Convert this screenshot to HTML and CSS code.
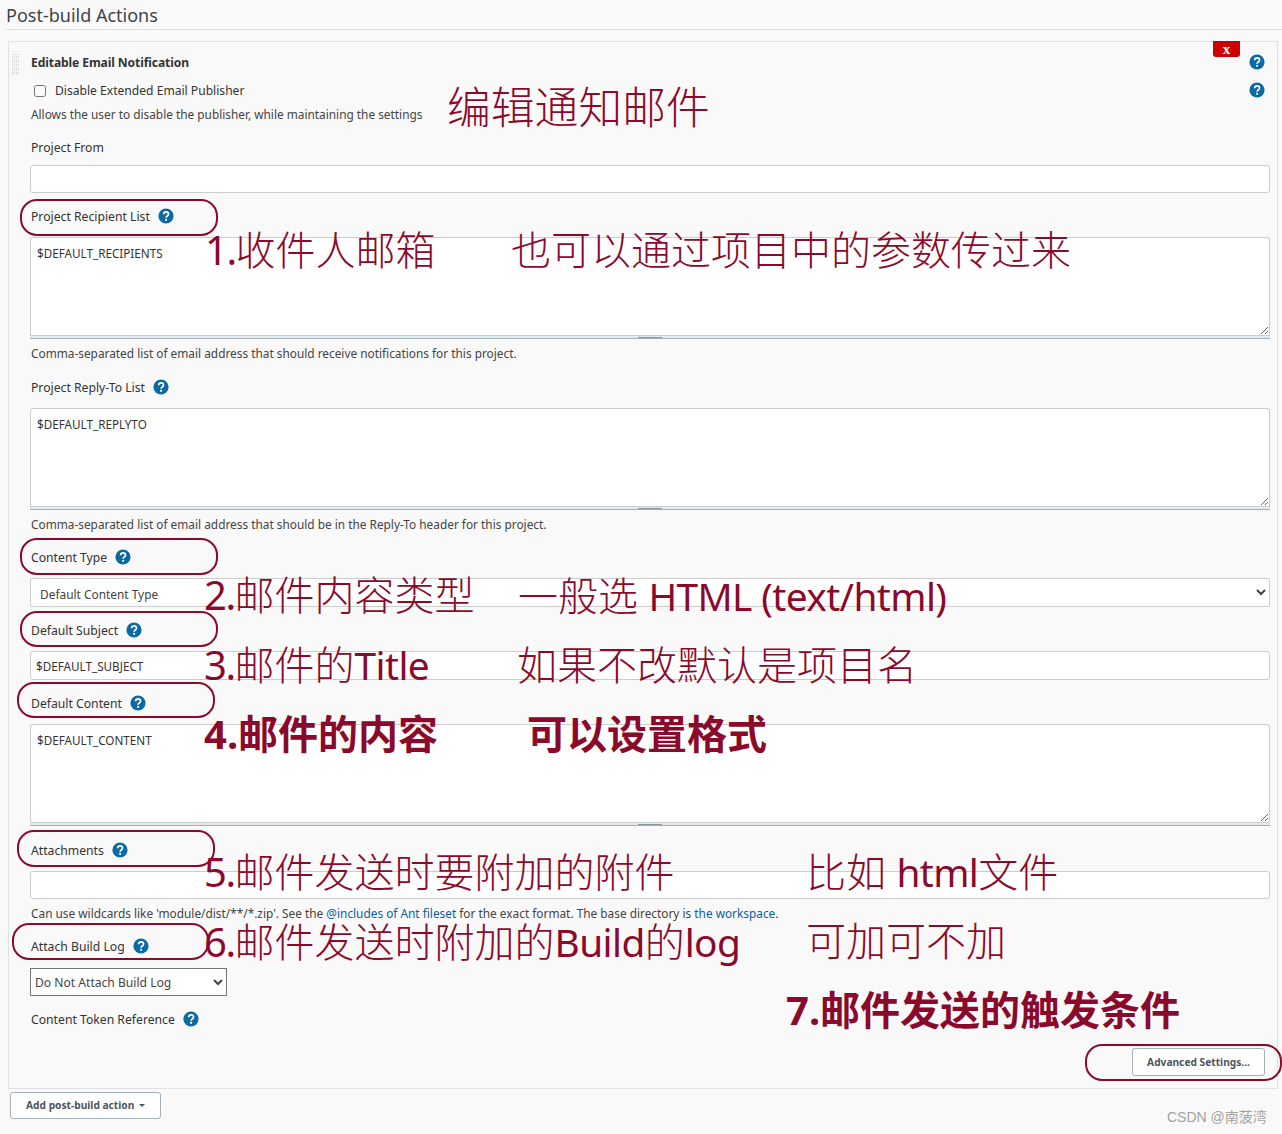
FILE: index.html
```html
<!DOCTYPE html>
<html lang="zh-CN">
<head>
<meta charset="utf-8">
<title>Post-build Actions</title>
<link rel="stylesheet" href="styles.css">
</head>
<body>
<svg class="defs" width="0" height="0" aria-hidden="true">
  <symbol id="help" viewBox="0 0 16 16">
    <circle cx="8" cy="8" r="7.6" fill="#0b6aa2"/>
    <path d="M5.6 6.2C5.7 4.7 6.7 3.9 8.1 3.9c1.4 0 2.4.9 2.4 2.1 0 1-.6 1.5-1.3 2-.7.5-1.1.9-1.1 1.8" fill="none" stroke="#fff" stroke-width="1.7"/>
    <circle cx="8.1" cy="11.8" r="1.1" fill="#fff"/>
  </symbol>
</svg>

<h2 class="section-title">Post-build Actions</h2>

<section class="panel">
  <span class="grip"></span>
  <button class="delete" type="button">x</button>

  <div class="head-row">
    <strong class="head-title">Editable Email Notification</strong>
    <svg class="help"><use href="#help"/></svg>
  </div>
  <div class="check-row">
    <label class="check-label"><input class="check" type="checkbox">Disable Extended Email Publisher</label>
    <svg class="help"><use href="#help"/></svg>
  </div>
  <div class="note">Allows the user to disable the publisher, while maintaining the settings</div>

  <div class="field">
    <div class="label">Project From</div>
    <input class="text text-close" type="text">
  </div>

  <div class="field">
    <div class="label">Project Recipient List <svg class="help"><use href="#help"/></svg></div>
    <div class="area-wrap">
      <textarea class="area">$DEFAULT_RECIPIENTS</textarea>
      <div class="area-grip"></div>
    </div>
    <div class="note">Comma-separated list of email address that should receive notifications for this project.</div>
  </div>

  <div class="field field-wide">
    <div class="label">Project Reply-To List <svg class="help"><use href="#help"/></svg></div>
    <div class="area-wrap">
      <textarea class="area">$DEFAULT_REPLYTO</textarea>
      <div class="area-grip"></div>
    </div>
    <div class="note">Comma-separated list of email address that should be in the Reply-To header for this project.</div>
  </div>

  <div class="field">
    <div class="label">Content Type <svg class="help"><use href="#help"/></svg></div>
    <select class="select-full"><option>Default Content Type</option></select>
  </div>

  <div class="field">
    <div class="label">Default Subject <svg class="help"><use href="#help"/></svg></div>
    <input class="text" type="text" value="$DEFAULT_SUBJECT">
  </div>

  <div class="field">
    <div class="label">Default Content <svg class="help"><use href="#help"/></svg></div>
    <div class="area-wrap">
      <textarea class="area">$DEFAULT_CONTENT</textarea>
      <div class="area-grip"></div>
    </div>
  </div>

  <div class="field field-wide">
    <div class="label">Attachments <svg class="help"><use href="#help"/></svg></div>
    <input class="text text-short" type="text">
    <div class="note">Can use wildcards like 'module/dist/**/*.zip'. See the <a href="#">@includes of Ant fileset</a> for the exact format. The base directory is <a href="#">the workspace</a>.</div>
  </div>

  <div class="field">
    <div class="label">Attach Build Log <svg class="help"><use href="#help"/></svg></div>
    <select class="select-small"><option>Do Not Attach Build Log</option></select>
  </div>

  <div class="field">
    <div class="label">Content Token Reference <svg class="help"><use href="#help"/></svg></div>
  </div>

  <div class="actions"><button class="btn btn-adv" type="button">Advanced Settings...</button></div>
</section>

<button class="btn btn-add" type="button">Add post-build action <span class="caret"></span></button>

<span class="oval ov-recipient"></span>
<span class="oval ov-type"></span>
<span class="oval ov-subject"></span>
<span class="oval ov-content"></span>
<span class="oval ov-attach"></span>
<span class="oval ov-log"></span>
<span class="oval ov-adv"></span>

<span class="note-mark big m-edit">编辑通知邮件</span>
<span class="note-mark m-1"><span class="num">1.</span>收件人邮箱</span>
<span class="note-mark m-1b">也可以通过项目中的参数传过来</span>
<span class="note-mark m-2"><span class="num">2.</span>邮件内容类型</span>
<span class="note-mark m-2b">一般选 <span class="latin">HTML (text/html)</span></span>
<span class="note-mark m-3"><span class="num">3.</span>邮件的<span class="latin">Title</span></span>
<span class="note-mark m-3b">如果不改默认是项目名</span>
<span class="note-mark bold m-4">4.邮件的内容</span>
<span class="note-mark bold m-4b">可以设置格式</span>
<span class="note-mark m-5"><span class="num">5.</span>邮件发送时要附加的附件</span>
<span class="note-mark m-5b">比如 <span class="latin">html</span>文件</span>
<span class="note-mark m-6"><span class="num">6.</span>邮件发送时附加的<span class="latin">Build</span>的<span class="latin">log</span></span>
<span class="note-mark m-6b">可加可不加</span>
<span class="note-mark bold m-7">7.邮件发送的触发条件</span>
<span class="watermark">CSDN @南菠湾</span>
</body>
</html>
```
FILE: styles.css
```css
* { box-sizing: border-box; }
html, body { margin: 0; height: 1134px; overflow: hidden; }
body {
  position: relative;
  background: #f9f9f9;
  color: #333;
  font: 12.2px/22px "Noto Sans", "Noto Sans CJK SC", sans-serif;
}
.defs { position: absolute; }
.section-title {
  margin: 0 0 0 6px;
  height: 30px;
  border-bottom: 1px solid #e0e0e0;
  font-size: 18px;
  font-weight: 400;
  line-height: 31px;
  color: #3f4448;
}
.panel {
  position: relative;
  margin: 11px 4px 0 8px;
  padding: 10px 7px 12px 21px;
  height: 1048px;
  background: #f9f9f9;
  border: 1px solid #e2e2e2;
}
.grip {
  position: absolute;
  left: 2px;
  top: 11px;
  width: 8px;
  height: 22px;
  background:
    linear-gradient(#f9f9f9 1px, transparent 1px) 0 0 / 2px 2px,
    linear-gradient(90deg, #f9f9f9 1px, #d2d2d2 1px) 0 0 / 2px 2px;
}
.delete {
  position: absolute;
  top: -1px;
  right: 37px;
  width: 27px;
  height: 16px;
  padding: 0;
  border: 0;
  border-radius: 0 0 3px 3px;
  background: #cc0000;
  color: #fff;
  font: 700 15px/13px "Liberation Serif", serif;
}
.help { width: 16px; height: 16px; vertical-align: -3px; margin-left: 5px; }
.head-row, .check-row {
  display: flex;
  justify-content: space-between;
  align-items: center;
  height: 20px;
  padding: 0 5px 0 1px;
}
.head-title { padding-top: 2px; line-height: 20px; font-weight: 700; font-size: 12.1px; letter-spacing: -.1px; color: #333; }
.check-row { margin-top: 8px; }
.check-label { display: flex; align-items: center; padding-top: 2px; line-height: 20px; font-size: 12.1px; }
.check { width: 12px; height: 12px; margin: 0 9px 0 3px; }
.note { margin-top: 3px; padding-left: 1px; height: 21px; font-size: 11.85px; color: #444; white-space: nowrap; }
.note a { color: #0b5ea0; text-decoration: none; }
.field { margin-top: 13px; }
.field-wide { margin-top: 14px; }
.label { padding-left: 1px; height: 20px; color: #333; }
.text {
  display: block;
  width: 100%;
  height: 29px;
  margin-top: 11px;
  padding: 1px 5px 0;
  border: 1px solid #ccc;
  border-radius: 3px;
  background: #fff;
  color: #333;
  font: 11.7px "Noto Sans", sans-serif;
}
.text-close { height: 28px; margin-top: 8px; }
.text-short { height: 28px; }
.area-wrap { margin-top: 11px; }
.area {
  display: block;
  width: 100%;
  height: 98px;
  padding: 4.5px 6px;
  border: 1px solid #ccc;
  border-bottom-width: 0;
  border-radius: 3px 3px 0 0;
  background: #fff;
  color: #333;
  font: 11.7px/20px "Noto Sans", sans-serif;
  resize: vertical;
}
.area-grip {
  height: 4px;
  background: #e6eaec linear-gradient(#8a979f, #8a979f) center 1px / 24px 1px no-repeat;
  border-top: 1px solid #c8cfd3;
  border-bottom: 1px solid #9fb0bd;
}
.select-full {
  display: block;
  width: 100%;
  height: 29px;
  margin-top: 11px;
  padding: 3px 0 0 5px;
  border: 1px solid #ccc;
  border-radius: 2px;
  background-color: #fff;
  color: #444;
  font: 11.9px "Noto Sans", sans-serif;
}
.select-small {
  display: block;
  width: 197px;
  height: 28px;
  margin-top: 12px;
  border: 1px solid #767676;
  border-radius: 0;
  background-color: #fff;
  color: #444;
  font: 12.1px "Noto Sans", sans-serif;
}
.actions { display: flex; justify-content: flex-end; margin-top: 19px; padding-right: 5px; }
.btn {
  height: 28px;
  border: 1px solid #a3b1bc;
  border-radius: 3px;
  background: #fff;
  color: #4d545d;
  font: 700 10.2px "Noto Sans", sans-serif;
}
.btn-adv { width: 133px; padding: 0; }
.btn-add { display: block; width: 151px; height: 27px; margin: 3px 0 0 10px; padding: 0 0 1px; }
.caret {
  display: inline-block;
  margin-left: 2px;
  vertical-align: 2px;
  border: 3px solid transparent;
  border-top-color: #4d545d;
  border-bottom-width: 0;
}
.oval {
  position: absolute;
  border: 2px solid #8b0a2b;
  border-radius: 17px;
}
.ov-recipient { left: 20px; top: 199px; width: 198px; height: 37px; }
.ov-type { left: 20px; top: 538px; width: 198px; height: 37px; }
.ov-subject { left: 20px; top: 611px; width: 198px; height: 36px; }
.ov-content { left: 17px; top: 682px; width: 198px; height: 36px; }
.ov-attach { left: 17px; top: 830px; width: 198px; height: 37px; }
.ov-log { left: 12px; top: 923px; width: 197px; height: 37px; }
.ov-adv { left: 1085px; top: 1044px; width: 197px; height: 37px; }
.note-mark {
  position: absolute;
  color: #8b0a2b;
  font: 300 40px/36px "Noto Sans", "Noto Sans CJK SC", sans-serif;
  white-space: nowrap;
}
.note-mark.big { font-size: 43.8px; }
.note-mark.bold { font-weight: 700; }
.num { font-weight: 400; letter-spacing: -1.5px; }
.latin { font-size: 38.8px; font-weight: 400; letter-spacing: -.6px; }
.m-edit { left: 447px; top: 89px; }
.m-1 { left: 205px; top: 232px; }
.m-1b { left: 511px; top: 232px; }
.m-2 { left: 204px; top: 577px; }
.m-2b { left: 518px; top: 578px; }
.m-3 { left: 204px; top: 647px; }
.m-3b { left: 517px; top: 647px; }
.m-4 { left: 204px; top: 716px; }
.m-4b { left: 527px; top: 716px; }
.m-5 { left: 204px; top: 854px; }
.m-5b { left: 806px; top: 854px; }
.m-6 { left: 204px; top: 924px; }
.m-6b { left: 806px; top: 923px; }
.m-7 { left: 786px; top: 992px; }
.watermark {
  position: absolute;
  left: 1167px;
  top: 1107px;
  color: #a3a3a3;
  font: 14px/20px "Liberation Sans", "Noto Sans CJK SC", sans-serif;
  white-space: nowrap;
}
```
